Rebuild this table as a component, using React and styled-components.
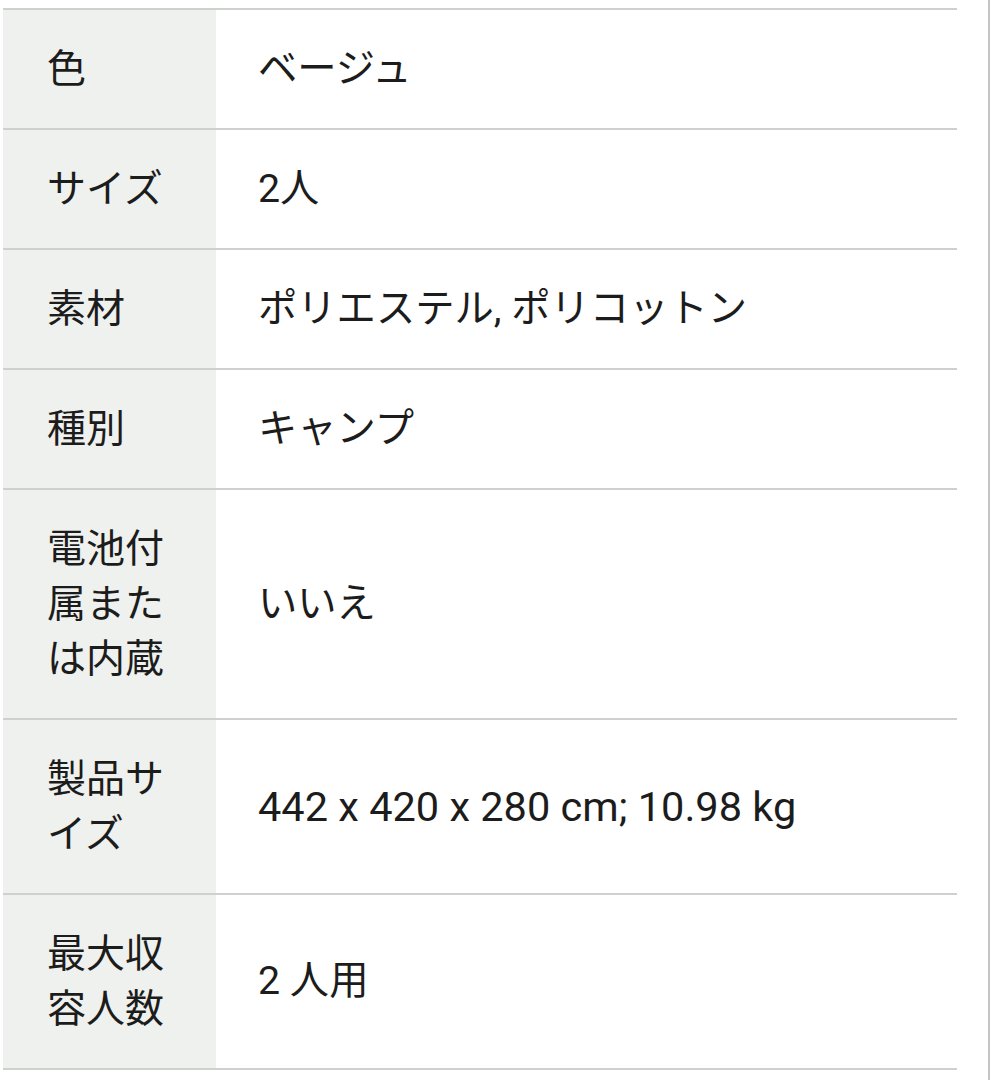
import React from "react";
import styled, { createGlobalStyle } from "styled-components";

const Global = createGlobalStyle`
  html, body {
    margin: 0;
    padding: 0;
    background: #ffffff;
  }
  body {
    font-family: Roboto, "Noto Sans CJK JP", "Noto Sans", sans-serif;
    color: #1c1c1c;
  }
`;

const Page = styled.div`
  width: 990px;
  min-height: 1080px;
  box-sizing: border-box;
  border-right: 2px solid #c4c4c4;
  padding: 8px 0 0 3px;
`;

const Table = styled.div`
  width: 954px;
  border-top: 2px solid #cfd1cf;
`;

const Row = styled.div`
  display: flex;
  align-items: stretch;
  border-bottom: 2px solid #cfd1cf;
`;

const Label = styled.div`
  flex: 0 0 213px;
  box-sizing: border-box;
  background: #eff1ee;
  padding: 32px 40px 31px 44px;
  font-size: 39px;
  line-height: 55px;
  color: #1c1c1c;
`;

const Value = styled.div`
  flex: 1;
  display: flex;
  align-items: center;
  padding: 0 20px 0 42px;
  font-size: ${(p) => (p.$latin ? "41.5px" : "39.3px")};
  line-height: 55px;
  color: #1c1c1c;
`;

const rows = [
  { label: "色", value: "ベージュ" },
  { label: "サイズ", value: "2人" },
  { label: "素材", value: "ポリエステル, ポリコットン" },
  { label: "種別", value: "キャンプ" },
  { label: "電池付属または内蔵", value: "いいえ" },
  { label: "製品サイズ", value: "442 x 420 x 280 cm; 10.98 kg", latin: true },
  { label: "最大収容人数", value: "2 人用" },
];

export default function App() {
  return (
    <>
      <Global />
      <Page>
        <Table>
          {rows.map((r) => (
            <Row key={r.label}>
              <Label>{r.label}</Label>
              <Value $latin={r.latin}>{r.value}</Value>
            </Row>
          ))}
        </Table>
      </Page>
    </>
  );
}
